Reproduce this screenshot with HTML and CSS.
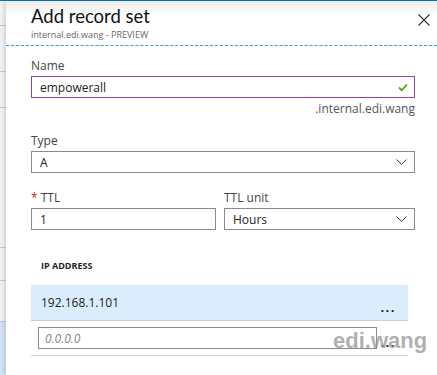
FILE: index.html
```html
<!DOCTYPE html>
<html lang="en">
<head>
  <meta charset="UTF-8">
  <title>Add record set</title>
  <link rel="stylesheet" href="styles.css">
</head>
<body>
  <div class="page">
    <div class="rail">
      <div class="rail-item h26"></div>
      <div class="rail-item h46"></div>
      <div class="rail-item h36"></div>
      <div class="rail-item h140"></div>
      <div class="rail-item h33"></div>
      <div class="rail-item h41"></div>
      <div class="rail-active"></div>
    </div>

    <div class="blade">
      <div class="blade-header">
        <div class="titles">
          <h1>Add record set</h1>
          <div class="subtitle">internal.edi.wang - PREVIEW</div>
        </div>
        <svg class="close" width="12" height="12" viewBox="0 0 12 12">
          <path d="M0.5 0.5 L11.5 11.5 M11.5 0.5 L0.5 11.5" stroke="#333" stroke-width="1.1" fill="none"/>
        </svg>
      </div>

      <div class="blade-body">
        <label class="field-label">Name</label>
        <div class="input valid">
          <span>empowerall</span>
          <svg width="10" height="9" viewBox="0 0 10 9">
            <path d="M1 4.5 L3.8 7.3 L9 1.5" stroke="#57a300" stroke-width="1.8" fill="none"/>
          </svg>
        </div>
        <div class="suffix">.internal.edi.wang</div>

        <label class="field-label">Type</label>
        <div class="input select">
          <span>A</span>
          <svg width="11" height="6" viewBox="0 0 11 6">
            <path d="M0.5 0.5 L5.5 5.3 L10.5 0.5" stroke="#333" stroke-width="1" fill="none"/>
          </svg>
        </div>

        <div class="pair">
          <div class="col">
            <label class="field-label"><span class="req">*</span> TTL</label>
            <div class="input"><span>1</span></div>
          </div>
          <div class="col">
            <label class="field-label">TTL unit</label>
            <div class="input select">
              <span>Hours</span>
              <svg width="11" height="6" viewBox="0 0 11 6">
                <path d="M0.5 0.5 L5.5 5.3 L10.5 0.5" stroke="#333" stroke-width="1" fill="none"/>
              </svg>
            </div>
          </div>
        </div>

        <div class="grid">
          <div class="grid-head">IP ADDRESS</div>
          <div class="grid-row selected">
            <span>192.168.1.101</span>
            <span class="more">...</span>
          </div>
          <div class="grid-row new">
            <div class="input ip"><span class="placeholder">0.0.0.0</span></div>
            <span class="more">...</span>
          </div>
        </div>
      </div>

      <div class="watermark">edi.wang</div>
    </div>
  </div>
</body>
</html>
```

FILE: styles.css
```css
* {
  box-sizing: border-box;
}

body {
  margin: 0;
  font-family: "Open Sans", "Noto Sans", sans-serif;
  color: #333;
  background: #fff;
  overflow: hidden;
}

.page {
  display: flex;
  height: 375px;
  border-top: 1px solid #0a72c9;
}

.rail {
  width: 6px;
  background: #f2f2f2;
  display: flex;
  flex-direction: column;
}

.rail-item {
  border-bottom: 1px solid #c9c9c9;
}

.h26 { height: 25px; }
.h46 { height: 46px; }
.h36 { height: 36px; }
.h140 { height: 140px; }
.h33 { height: 33px; }
.h41 { height: 41px; }

.rail-active {
  flex: 1;
  background: #d4e4f2;
}

.blade {
  flex: 1;
  position: relative;
  background: #fff;
  box-shadow: -2px 0 4px rgba(0, 0, 0, 0.12);
}

.blade-header {
  height: 45px;
  display: flex;
  justify-content: space-between;
  align-items: flex-start;
  padding: 3px 7px 0 25px;
  background: linear-gradient(#ececec, #fff 16px);
  border-bottom: 1px dashed #2aa6dc;
}

h1 {
  margin: 0;
  font-family: Lato, "Open Sans", sans-serif;
  font-size: 18.5px;
  font-weight: 400;
  line-height: 24px;
  color: #111;
}

.subtitle {
  font-size: 9px;
  line-height: 12px;
  color: #666;
  margin-top: 1px;
}

.close {
  margin-top: 10px;
}

.blade-body {
  padding: 12px 22px 0 25px;
}

.field-label {
  display: block;
  font-size: 12px;
  line-height: 16px;
  color: #444;
  margin-bottom: 2px;
}

.req {
  color: #e81123;
}

.input {
  height: 22px;
  border: 1px solid #8a8a8a;
  display: flex;
  align-items: center;
  justify-content: space-between;
  padding: 0 6px 0 8px;
  font-size: 12px;
  color: #222;
}

.input.valid {
  border-color: #9a3fb0;
}

.input.select svg {
  margin-right: 1px;
}

.suffix {
  text-align: right;
  font-size: 12px;
  line-height: 16px;
  color: #555;
  margin: 3px 0 16px;
}

.pair {
  display: flex;
  gap: 8px;
  margin-top: 17px;
}

.col {
  flex: 1;
}

.col:last-child {
  flex: 0 0 191px;
}

.grid {
  margin-top: 30px;
  width: 377px;
}

.grid-head {
  font-size: 9px;
  font-weight: 700;
  line-height: 12px;
  color: #222;
  padding-left: 10px;
  margin-bottom: 13px;
}

.grid-row {
  display: flex;
  align-items: center;
  justify-content: space-between;
  border-bottom: 1px solid #cfcfcf;
  font-size: 12px;
  color: #222;
}

.grid-row.selected {
  height: 36px;
  background: #dbedfc;
  padding: 0 12px 0 10px;
}

.grid-row.new {
  padding: 6px 12px 6px 7px;
}

.more {
  font-size: 13px;
  line-height: 13px;
  font-weight: 700;
  letter-spacing: 1.5px;
  align-self: flex-end;
  margin-bottom: 6px;
}

.grid-row.new .more {
  margin-bottom: 0;
}

.input.ip {
  width: 339px;
  padding-left: 6px;
}

.placeholder {
  color: #888;
  font-style: italic;
}

.watermark {
  position: absolute;
  left: 327px;
  top: 327px;
  font-family: "Liberation Sans", sans-serif;
  font-size: 22px;
  font-weight: 700;
  color: rgba(150, 150, 150, 0.75);
}
```
